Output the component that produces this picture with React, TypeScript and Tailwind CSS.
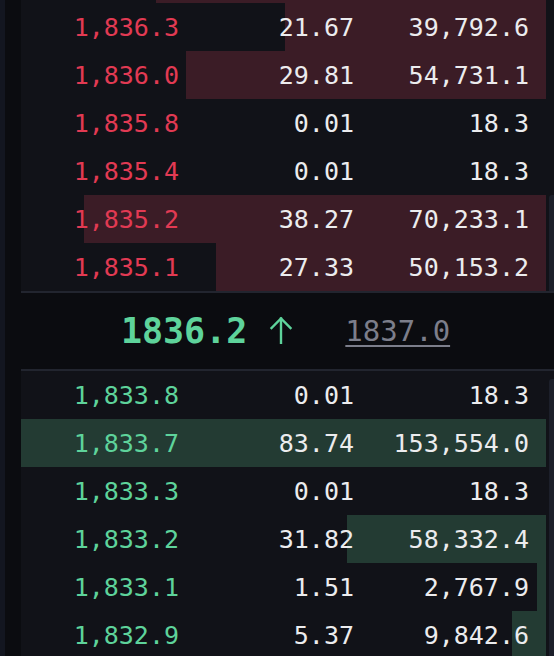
type Level = {
  price: string;
  amount: number;
  total: string;
  barOnly?: boolean;
};

const asks: Level[] = [
  { price: "1,836.5", amount: 32.34, total: "59,396.8", barOnly: true },
  { price: "1,836.3", amount: 21.67, total: "39,792.6" },
  { price: "1,836.0", amount: 29.81, total: "54,731.1" },
  { price: "1,835.8", amount: 0.01, total: "18.3" },
  { price: "1,835.4", amount: 0.01, total: "18.3" },
  { price: "1,835.2", amount: 38.27, total: "70,233.1" },
  { price: "1,835.1", amount: 27.33, total: "50,153.2" },
];

const bids: Level[] = [
  { price: "1,833.8", amount: 0.01, total: "18.3" },
  { price: "1,833.7", amount: 83.74, total: "153,554.0" },
  { price: "1,833.3", amount: 0.01, total: "18.3" },
  { price: "1,833.2", amount: 31.82, total: "58,332.4" },
  { price: "1,833.1", amount: 1.51, total: "2,767.9" },
  { price: "1,832.9", amount: 5.37, total: "9,842.6" },
];

const ASK_MAX = 43.53;
const BID_MAX = 83.74;

function Row({ level, side }: { level: Level; side: "ask" | "bid" }) {
  const max = side === "ask" ? ASK_MAX : BID_MAX;
  const pct = Math.min(100, (level.amount / max) * 100);
  return (
    <div className="relative h-[48px] shrink-0">
      <div
        className={
          side === "ask"
            ? "absolute top-0 right-0 bottom-0 bg-[#3b1c26]"
            : "absolute top-0 right-0 bottom-0 bg-[#233b33]"
        }
        style={{ width: `${pct}%` }}
      />
      {!level.barOnly && (
        <div className="relative grid h-full grid-cols-[158px_175px_175px] items-center pt-[1px] pr-4 text-right text-[25px] leading-none">
          <span className={side === "ask" ? "text-[#e23a53]" : "text-[#5ed39b]"}>
            {level.price}
          </span>
          <span className="text-[#ececee]">{level.amount.toFixed(2)}</span>
          <span className="text-[#ececee]">{level.total}</span>
        </div>
      )}
    </div>
  );
}

function ArrowUp() {
  return (
    <svg width="24" height="28" viewBox="0 0 24 28" fill="none" stroke="#5ed39b" strokeWidth="2.4" strokeLinecap="square">
      <path d="M12 2.5V27" />
      <path d="M2.5 12L12 2.5L21.5 12" />
    </svg>
  );
}

export default function App() {
  return (
    <div className="flex h-[656px] w-[554px] overflow-hidden bg-[#0b0c10] font-['DejaVu_Sans_Mono',monospace]">
      <div className="w-[5px] bg-[#131620]" />
      <div className="w-[16px] bg-[#0b0c10]" />
      <div className="flex min-w-0 flex-1 flex-col">
        <div className="flex h-[291px] shrink-0 bg-[#111218]">
          <div className="flex flex-1 flex-col justify-end overflow-hidden">
            {asks.map((a) => (
              <Row key={a.price} level={a} side="ask" />
            ))}
          </div>
          <div className="flex w-[8px] flex-col">
            <div className="mt-auto ml-auto h-[96px] w-[5px] rounded-tl-[3px] bg-[#1c1f2a]" />
          </div>
        </div>
        <div className="h-[2px] shrink-0 bg-[#22252f]" />
        <div className="flex h-[76px] shrink-0 items-center justify-center bg-[#0b0c10] pr-[4px]">
          <span className="text-[35px] leading-none font-bold text-[#5ed39b]">1836.2</span>
          <span className="ml-[22px] flex items-center pb-[2px]">
            <ArrowUp />
          </span>
          <span className="ml-[52px] text-[29px] leading-none text-[#7c7e8b] underline decoration-2 underline-offset-[4px]">
            1837.0
          </span>
        </div>
        <div className="h-[2px] shrink-0 bg-[#22252f]" />
        <div className="flex min-h-0 flex-1 bg-[#111218]">
          <div className="flex flex-1 flex-col overflow-hidden">
            {bids.map((b) => (
              <Row key={b.price} level={b} side="bid" />
            ))}
          </div>
          <div className="flex w-[8px] flex-col">
            <div className="mt-[8px] ml-auto w-[5px] flex-1 rounded-tl-[3px] bg-[#1c1f2a]" />
          </div>
        </div>
      </div>
    </div>
  );
}
